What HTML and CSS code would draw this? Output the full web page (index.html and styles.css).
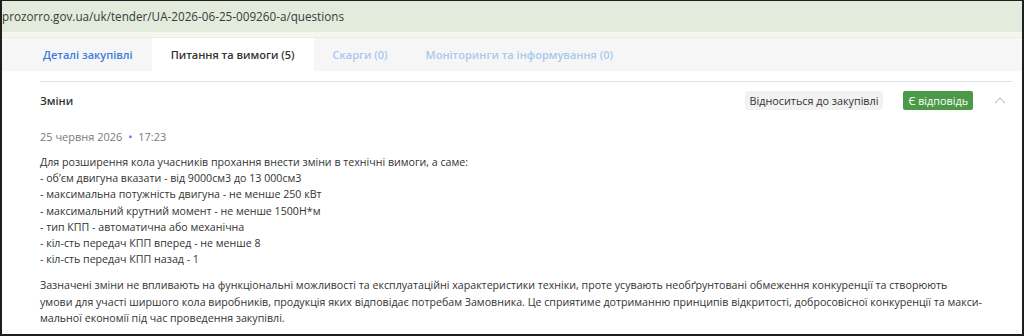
FILE: index.html
```html
<!DOCTYPE html>
<html lang="uk">
<head>
  <meta charset="UTF-8">
  <meta name="viewport" content="width=device-width, initial-scale=1.0">
  <title>Питання та вимоги</title>
  <link rel="stylesheet" href="styles.css">
</head>
<body>
  <div class="frame">
    <div class="urlbar">prozorro.gov.ua/uk/tender/UA-2026-06-25-009260-a/questions</div>
    <div class="urlbar-edge"></div>
    <ul class="tabs">
      <li class="tab">Деталі закупівлі</li>
      <li class="tab active">Питання та вимоги (5)</li>
      <li class="tab muted">Скарги (0)</li>
      <li class="tab muted">Моніторинги та інформування (0)</li>
    </ul>
    <section class="question">
      <div class="q-head">
        <h3 class="q-title">Зміни</h3>
        <span class="badge">Відноситься до закупівлі</span>
        <span class="badge answered">Є відповідь</span>
        <svg class="chevron" width="12" height="8" viewBox="0 0 12 8"><path d="M1 7 L6 2 L11 7" fill="none" stroke="#c4c8cc" stroke-width="1.2"/></svg>
      </div>
      <div class="q-date">25 червня 2026 <span class="dot">•</span> 17:23</div>
      <div class="q-text">
        <p>Для розширення кола учасників прохання внести зміни в технічні вимоги, а саме:<br>
        - об’єм двигуна вказати - від 9000см3 до 13 000см3<br>
        - максимальна потужність двигуна - не менше 250 кВт<br>
        - максимальний крутний момент - не менше 1500Н*м<br>
        - тип КПП - автоматична або механічна<br>
        - кіл-сть передач КПП вперед - не менше 8<br>
        - кіл-сть передач КПП назад - 1</p>
        <p>Зазначені зміни не впливають на функціональні можливості та експлуатаційні характеристики техніки, проте усувають необґрунтовані обмеження конкуренції та створюють<br>
        умови для участі ширшого кола виробників, продукція яких відповідає потребам Замовника. Це сприятиме дотриманню принципів відкритості, добросовісної конкуренції та макси&shy;мальної економії під час проведення закупівлі.</p>
      </div>
    </section>
  </div>
</body>
</html>
```

FILE: styles.css
```css
html, body { margin:0;padding:0;height:100%;background:#1e1e1e;overflow:hidden }
body { font-family:"Open Sans","Noto Sans",sans-serif;color:#333 }
.frame { background:#fff;margin:1px 2px 0 2px;height:calc(100% - 3px);overflow:hidden }
.urlbar { background:#e3ecdc;height:31px;line-height:31px;font-size:11.7px;color:#3a3a3a }
.urlbar-edge { background:#f3f8ee;height:5px;border-bottom:1px solid #e8ecef }
.tabs { list-style:none;margin:0;padding:0 0 0 22px;background:#f6f6f6;display:flex;height:33px }
.tab { padding:0 19px;font-size:11px;font-weight:600;line-height:33px;color:#3b7ddd }
.tab.active { background:#fff;color:#333 }
.tab.muted { color:#a9c8ee }
.question { margin:10px 10px 0 38px;border-top:1px solid #dde3ea;padding-top:8px }
.q-head { display:flex;align-items:center;height:20px }
.q-title { margin:0;font-size:11px;font-weight:600;flex:1 }
.badge { font-size:10.8px;background:#f2f2f2;border-radius:4px;padding:0 5px;line-height:19px;margin-right:20px }
.badge.answered { background:#4c9a48;color:#fff;border-radius:2px;margin-right:21px }
.chevron { margin-right:6px }
.q-date { margin-top:19px;font-size:11px;color:#7a7a7a }
.q-date .dot { color:#3b7ddd;margin:0 3px }
.q-text { margin-top:10px;font-size:10.65px;line-height:16.2px;color:#333;padding-right:12px;hyphens:manual }
.q-text p { margin:0 0 10px }
```
